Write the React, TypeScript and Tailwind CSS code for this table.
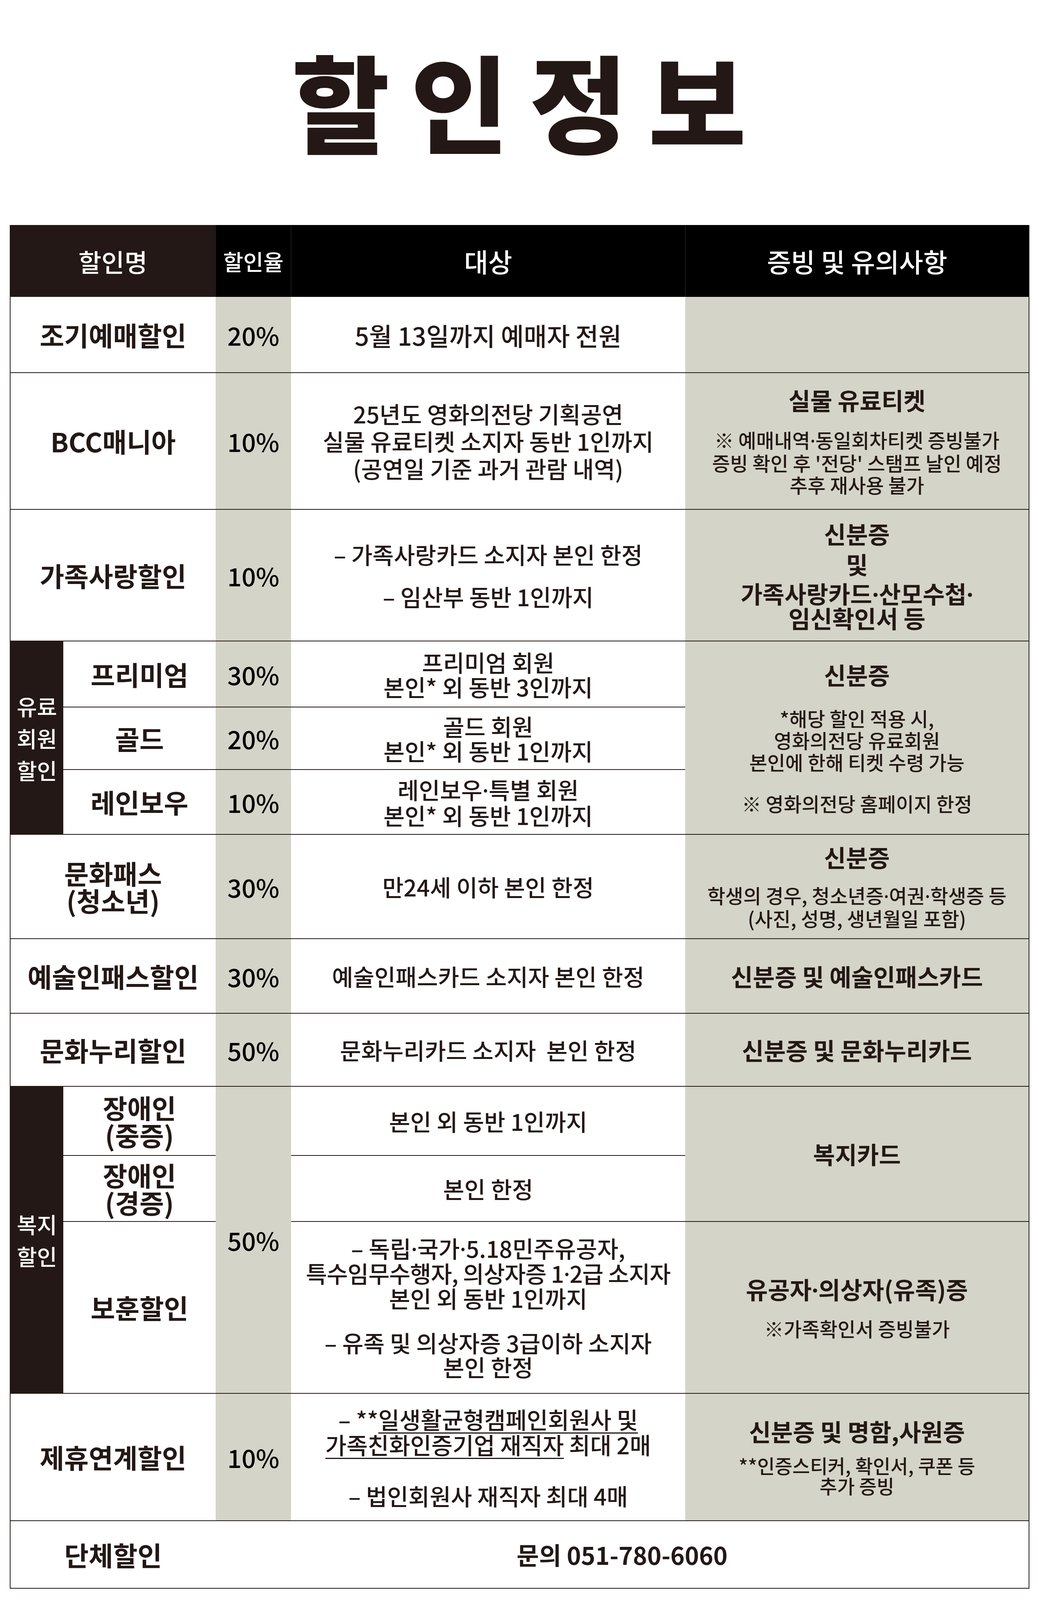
import { ReactNode } from 'react';

// the frame is 4096px tall, so the vertical metrics are squeezed to fit the whole sheet
const line = 'border-b-2 border-[#231815]';
const gray = 'bg-[#d4d4c8]';

// narrow middle dot (the CJK font draws it full width)
const D = () => <span className="font-['Noto_Sans',sans-serif]">·</span>;

function Label({ children, colSpan = 2, rowSpan, className = 'font-bold' }: { children: ReactNode; colSpan?: number; rowSpan?: number; className?: string }) {
    return (
        <td colSpan={colSpan} rowSpan={rowSpan} className={`${line} text-center align-middle text-[68px] leading-[70px] ${className}`}>
            {children}
        </td>
    );
}

function Pct({ children, rowSpan }: { children: ReactNode; rowSpan?: number }) {
    return (
        <td rowSpan={rowSpan} className={`${line} ${gray} text-center align-middle text-[64px] font-medium text-black`}>
            {children}
        </td>
    );
}

function Target({ children, rowSpan, className = 'leading-[65px]' }: { children: ReactNode; rowSpan?: number; className?: string }) {
    return (
        <td rowSpan={rowSpan} className={`${line} text-center align-middle text-[59px] font-medium whitespace-nowrap ${className}`}>
            {children}
        </td>
    );
}

function Note({ children, rowSpan }: { children: ReactNode; rowSpan?: number }) {
    return (
        <td rowSpan={rowSpan} className={`${line} ${gray} text-center align-middle whitespace-nowrap`}>
            {children}
        </td>
    );
}

function Head({ children }: { children: ReactNode }) {
    return <div className="text-[61px] leading-[66px] font-bold">{children}</div>;
}

function Small({ children, className = '' }: { children: ReactNode; className?: string }) {
    return <div className={`text-[50px] leading-[56px] font-medium ${className}`}>{children}</div>;
}

function Group({ lines, rowSpan }: { lines: string[]; rowSpan: number }) {
    return (
        <td rowSpan={rowSpan} className={`${line} bg-[#231815] text-center align-middle text-[56px] leading-[82px] font-medium text-white`}>
            {lines.map((l) => (
                <div key={l}>{l}</div>
            ))}
        </td>
    );
}

export default function App() {
    return (
        <div className="w-[2657px] bg-white pb-[26px] font-['Noto_Sans_CJK_KR',sans-serif] text-[#231815]">
            <div className="flex h-[576px] items-center justify-center pb-[70px]">
                <h1 className="pl-[54px] text-[272px] leading-none font-black tracking-[54px] text-[#231815]">할인정보</h1>
            </div>

            <table className="ml-[25px] w-[2608px] table-fixed border-collapse border-x-2 border-[#231815]">
                <colgroup>
                    <col className="w-[136px]" />
                    <col className="w-[390px]" />
                    <col className="w-[193px]" />
                    <col className="w-[1009px]" />
                    <col className="w-[880px]" />
                </colgroup>
                <thead>
                    <tr className="h-[184px] text-white">
                        <th colSpan={2} className="bg-[#231815] text-[64px] font-medium">할인명</th>
                        <th className="border-l-2 border-[#1a1a1a] bg-black text-[56px] font-medium">할인율</th>
                        <th className="border-l-2 border-[#1a1a1a] bg-black text-[67px] font-medium">대상</th>
                        <th className="border-l-2 border-[#1a1a1a] bg-black text-[67px] font-medium">증빙 및 유의사항</th>
                    </tr>
                </thead>
                <tbody>
                    <tr className="h-[194px]">
                        <Label>조기예매할인</Label>
                        <Pct>20%</Pct>
                        <Target className="text-[64px]">5월 13일까지 예매자 전원</Target>
                        <Note>{null}</Note>
                    </tr>

                    <tr className="h-[350px]">
                        <Label className="font-semibold">BCC매니아</Label>
                        <Pct>10%</Pct>
                        <Target className="leading-[70px]">
                            <div>25년도 영화의전당 기획공연</div>
                            <div>실물 유료티켓 소지자 동반 1인까지</div>
                            <div>(공연일 기준 과거 관람 내역)</div>
                        </Target>
                        <Note>
                            <Head>실물 유료티켓</Head>
                            <div className="mt-[40px]">
                                <Small>
                                    ※ 예매내역<D />동일회차티켓 증빙불가
                                </Small>
                                <Small>증빙 확인 후 '전당' 스탬프 날인 예정</Small>
                                <Small>추후 재사용 불가</Small>
                            </div>
                        </Note>
                    </tr>

                    <tr className="h-[337px]">
                        <Label>가족사랑할인</Label>
                        <Pct>10%</Pct>
                        <Target>
                            <div>– 가족사랑카드 소지자 본인 한정</div>
                            <div className="mt-[43px]">– 임산부 동반 1인까지</div>
                        </Target>
                        <Note>
                            <Head>신분증</Head>
                            <div className="mt-[12px]">
                                <Head>및</Head>
                            </div>
                            <div className="mt-[12px] text-[61px] leading-[60px] font-bold">
                                <div>
                                    가족사랑카드<D />산모수첩<D />
                                </div>
                                <div>임신확인서 등</div>
                            </div>
                        </Note>
                    </tr>

                    <tr className="h-[169px]">
                        <Group lines={['유료', '회원', '할인']} rowSpan={3} />
                        <Label colSpan={1}>프리미엄</Label>
                        <Pct>30%</Pct>
                        <Target className="leading-[63px]">
                            <div>프리미엄 회원</div>
                            <div>본인* 외 동반 3인까지</div>
                        </Target>
                        <Note rowSpan={3}>
                            <Head>신분증</Head>
                            <div className="mt-[50px]">
                                <Small>*해당 할인 적용 시,</Small>
                                <Small>영화의전당 유료회원</Small>
                                <Small>본인에 한해 티켓 수령 가능</Small>
                                <Small className="mt-[50px]">※ 영화의전당 홈페이지 한정</Small>
                            </div>
                        </Note>
                    </tr>
                    <tr className="h-[160px]">
                        <Label colSpan={1}>골드</Label>
                        <Pct>20%</Pct>
                        <Target className="leading-[63px]">
                            <div>골드 회원</div>
                            <div>본인* 외 동반 1인까지</div>
                        </Target>
                    </tr>
                    <tr className="h-[166px]">
                        <Label colSpan={1}>레인보우</Label>
                        <Pct>10%</Pct>
                        <Target className="leading-[63px]">
                            <div>
                                레인보우<D />특별 회원
                            </div>
                            <div>본인* 외 동반 1인까지</div>
                        </Target>
                    </tr>

                    <tr className="h-[267px]">
                        <Label>
                            <div>문화패스</div>
                            <div>(청소년)</div>
                        </Label>
                        <Pct>30%</Pct>
                        <Target>만24세 이하 본인 한정</Target>
                        <Note>
                            <Head>신분증</Head>
                            <div className="mt-[36px]">
                                <Small>
                                    학생의 경우, 청소년증<D />여권<D />학생증 등
                                </Small>
                                <Small>(사진, 성명, 생년월일 포함)</Small>
                            </div>
                        </Note>
                    </tr>

                    <tr className="h-[191px]">
                        <Label>예술인패스할인</Label>
                        <Pct>30%</Pct>
                        <Target>예술인패스카드 소지자 본인 한정</Target>
                        <Note>
                            <Head>신분증 및 예술인패스카드</Head>
                        </Note>
                    </tr>

                    <tr className="h-[187px]">
                        <Label>문화누리할인</Label>
                        <Pct>50%</Pct>
                        <Target>문화누리카드 소지자&nbsp;&nbsp;본인 한정</Target>
                        <Note>
                            <Head>신분증 및 문화누리카드</Head>
                        </Note>
                    </tr>

                    <tr className="h-[177px]">
                        <Group lines={['복지', '할인']} rowSpan={3} />
                        <Label colSpan={1}>
                            <div>장애인</div>
                            <div>(중증)</div>
                        </Label>
                        <Pct rowSpan={3}>50%</Pct>
                        <Target>본인 외 동반 1인까지</Target>
                        <Note rowSpan={2}>
                            <Head>복지카드</Head>
                        </Note>
                    </tr>
                    <tr className="h-[169px]">
                        <Label colSpan={1}>
                            <div>장애인</div>
                            <div>(경증)</div>
                        </Label>
                        <Target>본인 한정</Target>
                    </tr>
                    <tr className="h-[440px]">
                        <Label colSpan={1}>보훈할인</Label>
                        <Target className="text-[58px] leading-[62px]">
                            <div>
                                – 독립<D />국가<D />5.18민주유공자,
                            </div>
                            <div className="tracking-[-1px]">
                                특수임무수행자, 의상자증 1<D />2급 소지자
                            </div>
                            <div>본인 외 동반 1인까지</div>
                            <div className="mt-[52px]">– 유족 및 의상자증 3급이하 소지자</div>
                            <div>본인 한정</div>
                        </Target>
                        <Note>
                            <Head>
                                유공자<D />의상자(유족)증
                            </Head>
                            <Small className="mt-[36px]">※가족확인서 증빙불가</Small>
                        </Note>
                    </tr>

                    <tr className="h-[326px]">
                        <Label>제휴연계할인</Label>
                        <Pct>10%</Pct>
                        <Target>
                            <div>
                                – **<span className="underline decoration-[3px] underline-offset-[9px]">일생활균형캠페인회원사 및 </span>
                            </div>
                            <div>
                                <span className="underline decoration-[3px] underline-offset-[9px]">가족친화인증기업 재직자</span> 최대 2매
                            </div>
                            <div className="mt-[66px]">– 법인회원사 재직자 최대 4매</div>
                        </Target>
                        <Note>
                            <Head>신분증 및 명함,사원증</Head>
                            <div className="mt-[28px] text-[49px] leading-[52px] font-medium">
                                <div>**인증스티커, 확인서, 쿠폰 등</div>
                                <div>추가 증빙</div>
                            </div>
                        </Note>
                    </tr>

                    <tr className="h-[173px]">
                        <Label>단체할인</Label>
                        <td colSpan={3} className={`${line} text-center align-middle text-[62px] font-bold`}>
                            문의 051-780-6060
                        </td>
                    </tr>
                </tbody>
            </table>
        </div>
    );
}
